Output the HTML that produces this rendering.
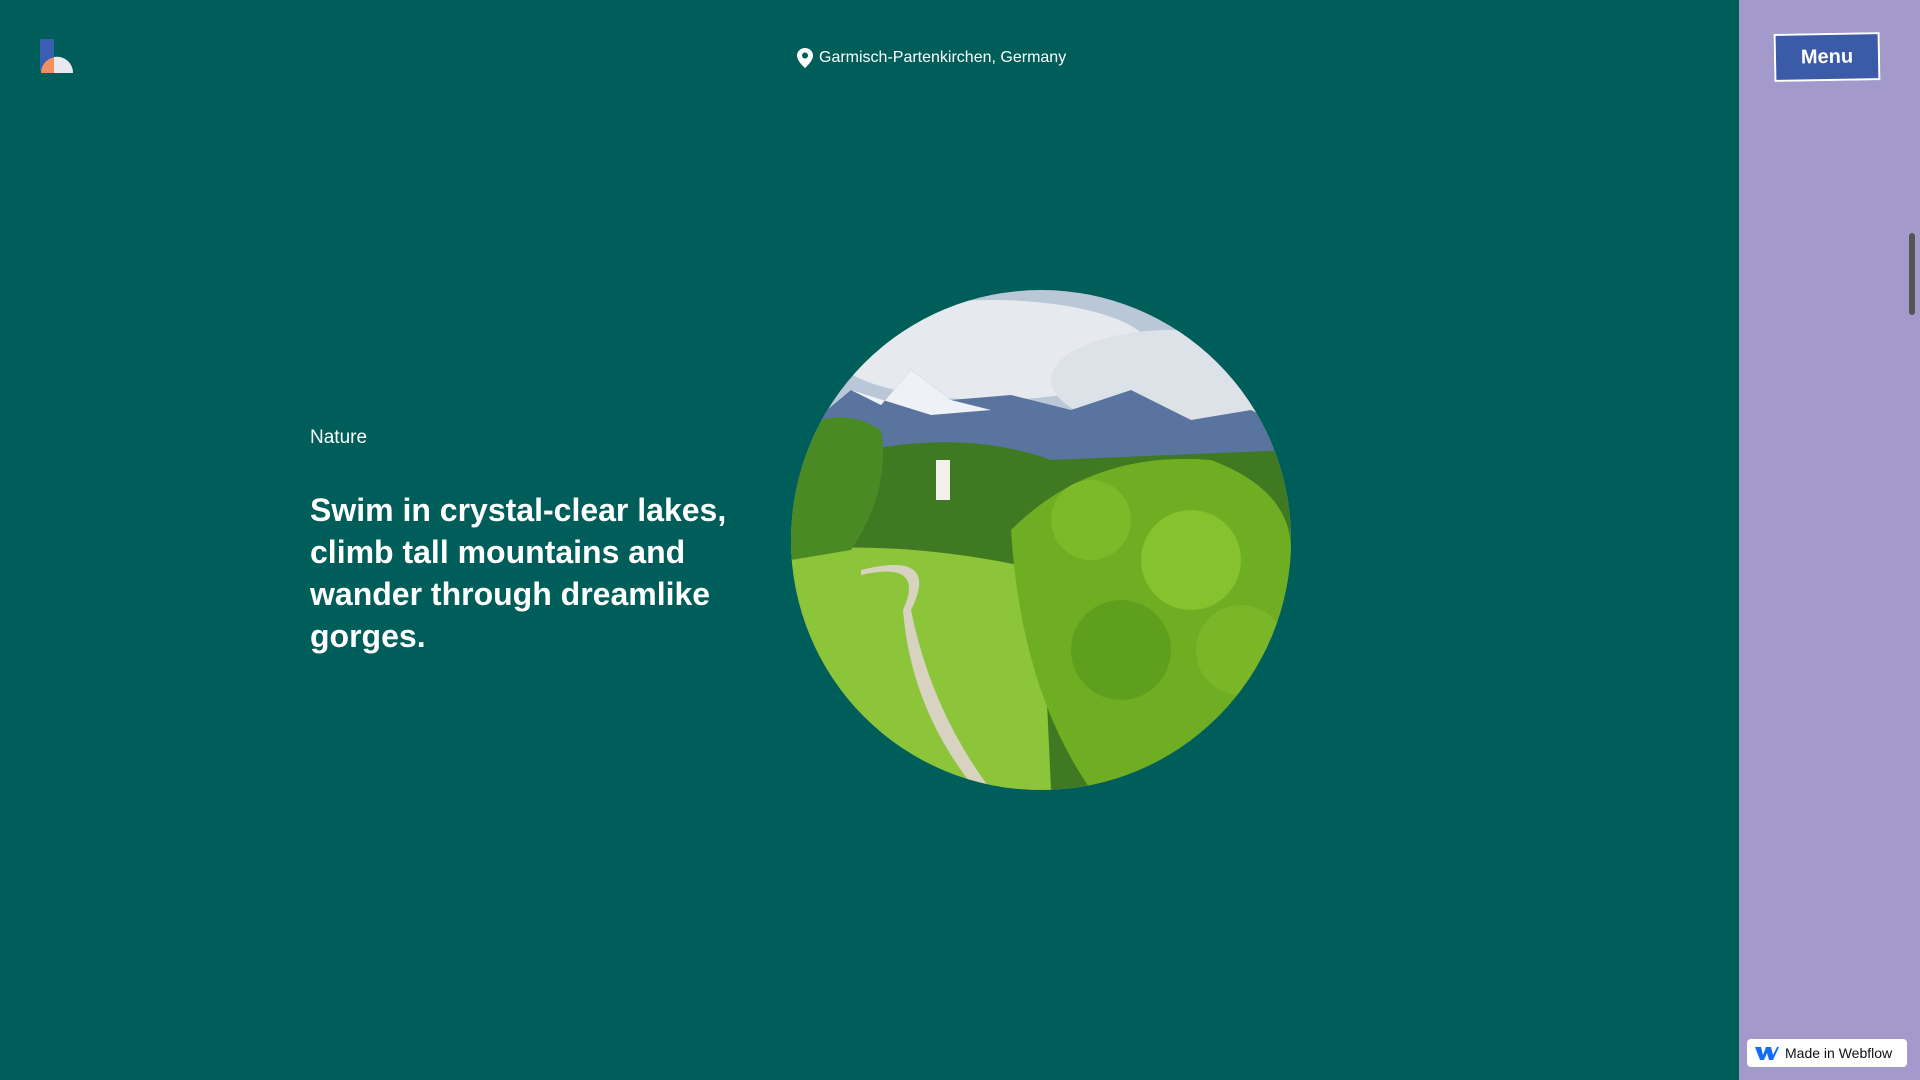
<!DOCTYPE html>
<html><head><meta charset="utf-8"><style>
html,body{margin:0;width:1920px;height:1080px;overflow:hidden;font-family:"Liberation Sans",Arial,sans-serif}
.main{position:absolute;left:0;top:0;width:1739px;height:1080px;background:#005e5a}
.side{position:absolute;left:1739px;top:0;width:181px;height:1080px;background:#a39acb}
.loc{position:absolute;left:797px;top:48px;color:#fff;font-size:16px;display:flex;align-items:center;gap:6px}
.menu{position:absolute;left:1774px;top:33px;width:102px;height:44px;background:#3b5ba9;border:2px solid #fff;color:#fff;font-weight:bold;font-size:20px;display:flex;align-items:center;justify-content:center;transform:rotate(-1deg)}
.nat{position:absolute;left:310px;top:427px;color:#fff;font-size:19px}
h1{position:absolute;left:310px;top:489px;margin:0;width:470px;color:#fff;font-size:32px;line-height:42px;font-weight:bold}
.circ{position:absolute;left:791px;top:290px;width:500px;height:500px;border-radius:50%;overflow:hidden}
.badge{position:absolute;left:1747px;top:1039px;width:160px;height:28px;background:#fff;border-radius:4px;font-size:14px;color:#111;display:flex;align-items:center;gap:6px;padding-left:8px;box-sizing:border-box}
.sb{position:absolute;left:1909px;top:233px;width:6px;height:82px;background:#555;border-radius:3px}
</style></head><body>
<div class="main"></div><div class="side"></div>
<svg style="position:absolute;left:39px;top:39px" width="36" height="35"><rect x="1" y="0" width="14" height="32" fill="#3a5fb0"/><path d="M2 34 A16 16 0 0 1 34 34Z" fill="#f09060"/><path d="M15 18 A16 16 0 0 1 34 34 L15 34Z" fill="#e8e8f0"/></svg>
<div class="loc"><svg width="16" height="20" viewBox="0 0 16 20"><path d="M8 0C3.6 0 0 3.4 0 7.7 0 13 8 20 8 20s8-7 8-12.3C16 3.4 12.4 0 8 0z" fill="#fff"/><circle cx="8" cy="7.5" r="3" fill="#005e5a"/></svg>Garmisch-Partenkirchen, Germany</div>
<div class="menu">Menu</div>
<div class="nat">Nature</div>
<h1>Swim in crystal-clear lakes, climb tall mountains and wander through dreamlike gorges.</h1>
<div class="circ"><svg width="500" height="500" viewBox="0 0 500 500">
<rect width="500" height="500" fill="#b9c7d6"/>
<ellipse cx="200" cy="60" rx="160" ry="50" fill="#e6eaef"/><ellipse cx="380" cy="90" rx="120" ry="50" fill="#dde2e8"/>
<path d="M0 150 L60 100 L90 115 L120 80 L160 110 L220 105 L280 120 L340 100 L400 130 L460 120 L500 140 L500 220 L0 220Z" fill="#5a74a0"/>
<path d="M60 100 L90 115 L120 80 L160 110 L200 120 L140 125 Z" fill="#eef2f6"/>
<path d="M0 180 Q150 130 260 170 L500 160 L500 500 L0 500Z" fill="#3f7a22"/>
<path d="M0 260 Q120 250 250 280 L260 500 L0 500Z" fill="#8cc43a"/>
<path d="M0 150 Q40 110 90 140 Q100 200 60 260 L0 270Z" fill="#4a8a25"/>
<path d="M220 240 Q300 160 420 170 Q500 200 500 260 L500 500 L300 500 Q230 400 220 240Z" fill="#6fae22"/>
<circle cx="300" cy="230" r="40" fill="#7dba2a"/><circle cx="400" cy="270" r="50" fill="#86c22e"/><circle cx="330" cy="360" r="50" fill="#5f9f1e"/><circle cx="450" cy="360" r="45" fill="#7ab628"/>
<path d="M70 280 Q150 260 120 320 Q140 420 200 500 L185 500 Q120 420 112 320 Q135 270 70 285Z" fill="#d8d2c0"/>
<rect x="145" y="170" width="14" height="40" fill="#f2f0ea"/>
</svg></div>
<div class="sb"></div>
<div class="badge"><svg width="24" height="14" viewBox="0 0 24 14"><path d="M0 1h6l2 8 3-8h5l2 8 4-8h2l-6 13h-4l-2-7-3 7H5z" fill="#146ef5"/></svg>Made in Webflow</div>
</body></html>
